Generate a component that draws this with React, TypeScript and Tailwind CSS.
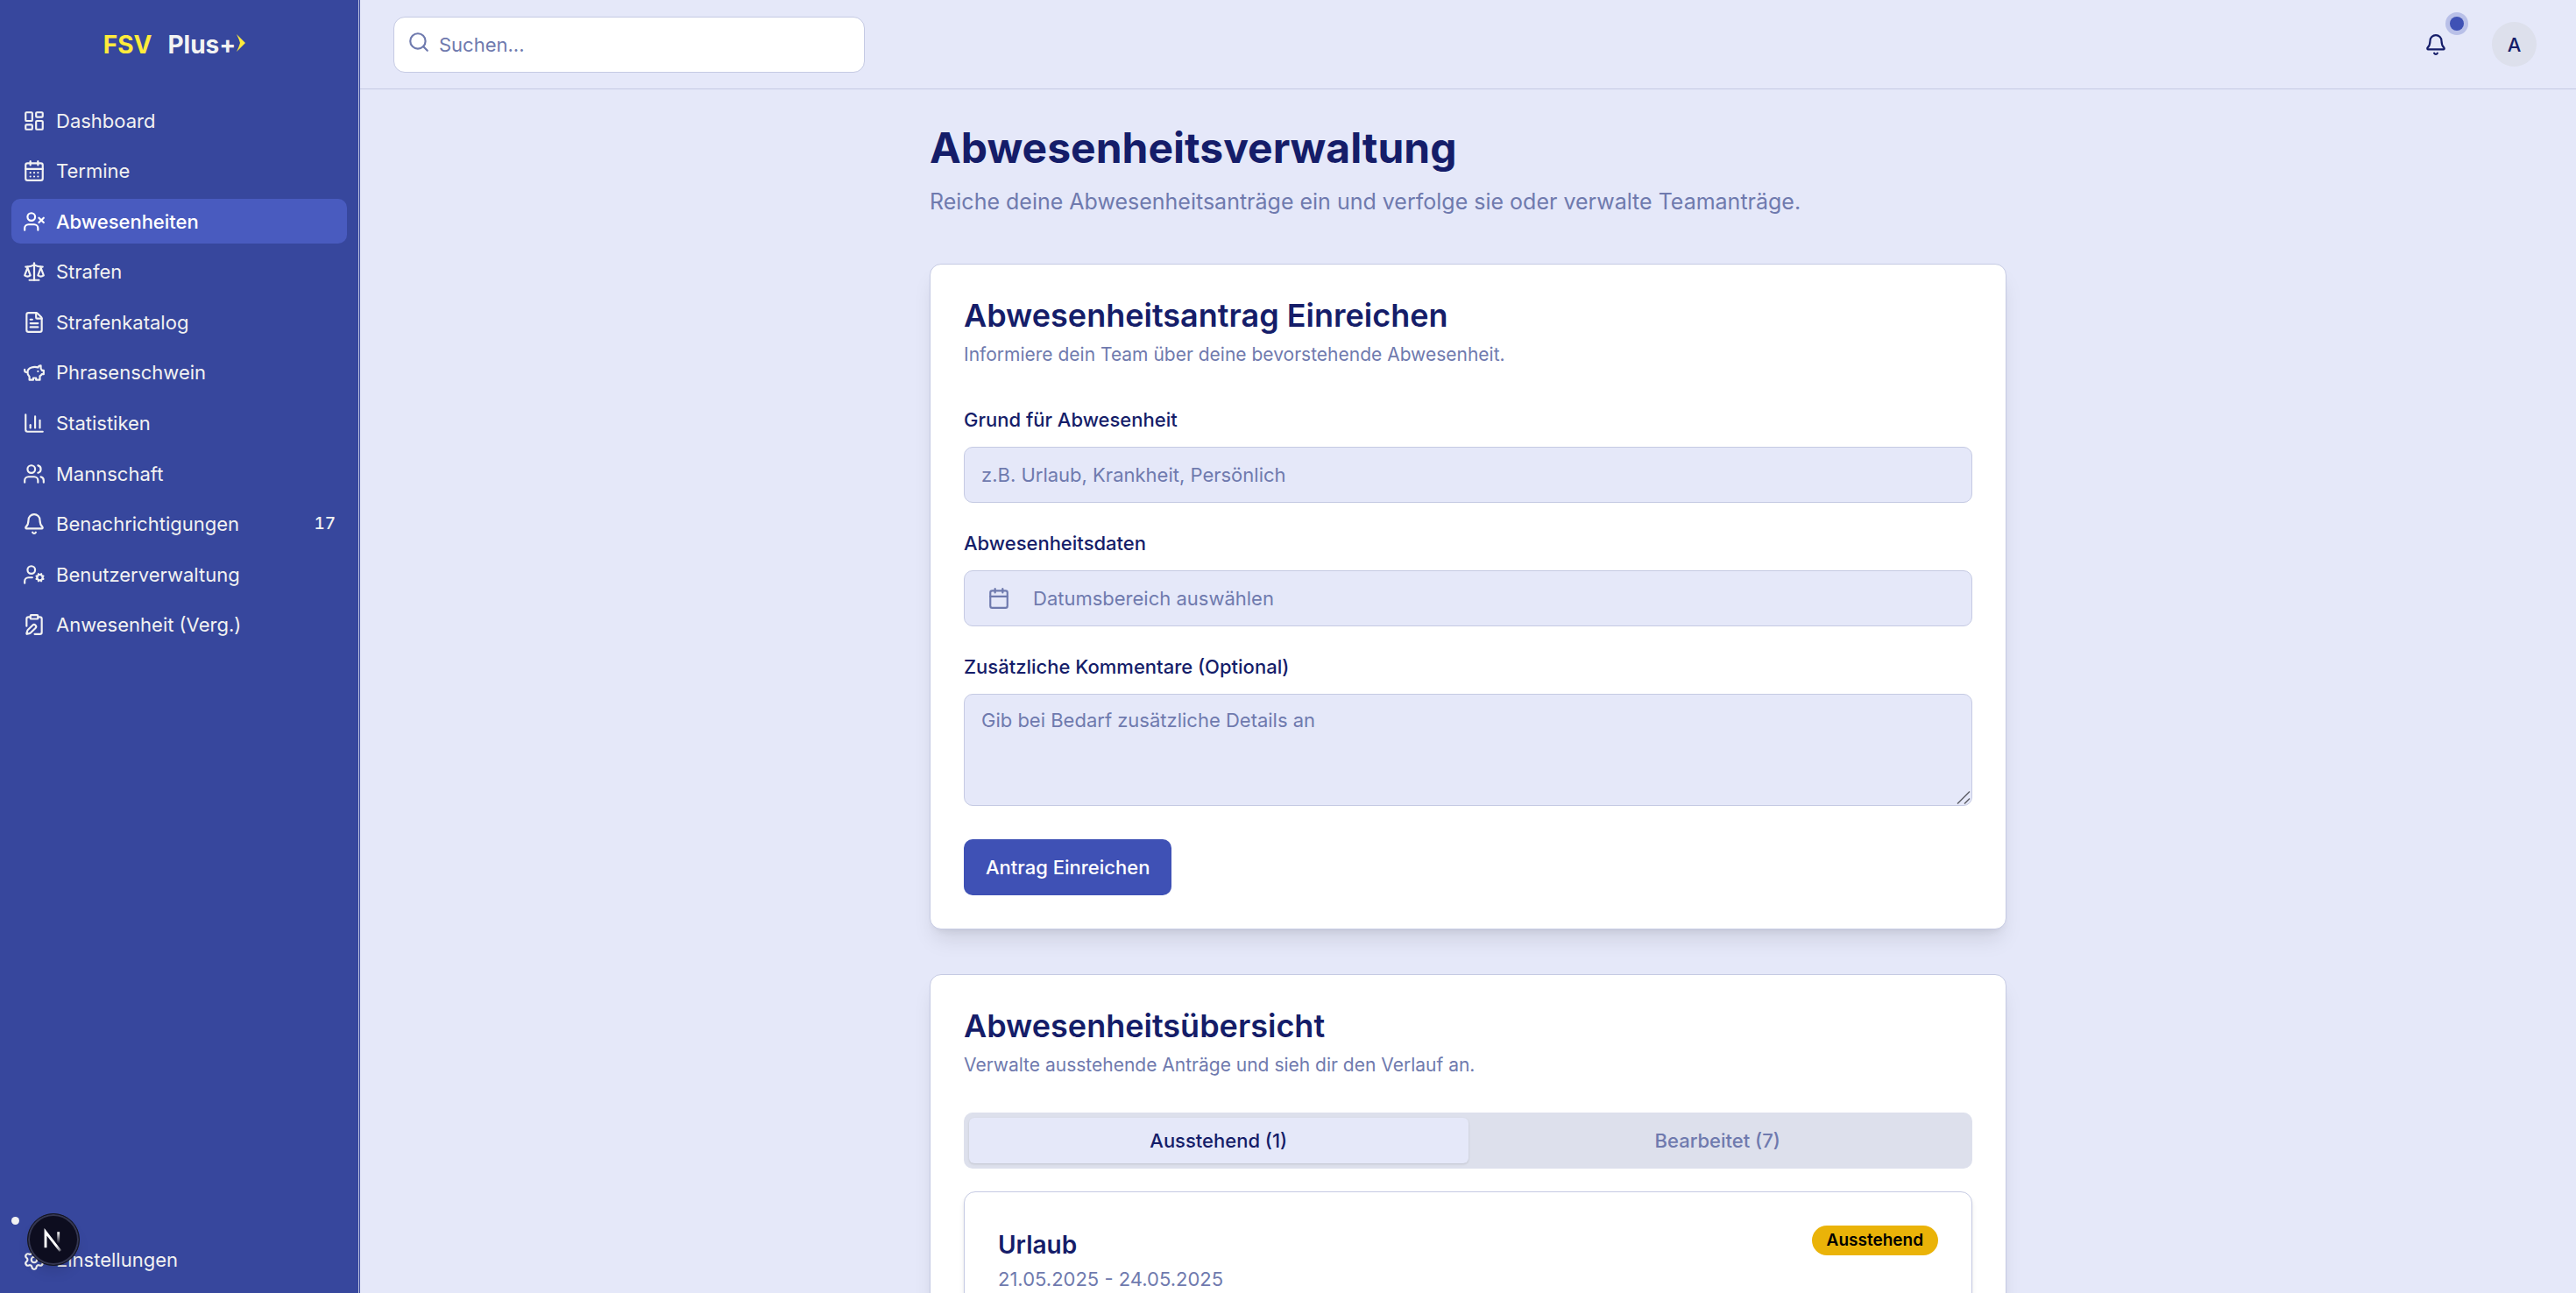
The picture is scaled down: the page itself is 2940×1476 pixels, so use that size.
import type { ReactNode } from "react";
import {
  Bell,
  Calendar,
  CalendarDays,
  ChartColumn,
  ClipboardPen,
  FileText,
  LayoutDashboard,
  Scale,
  Search,
  Settings,
  UserCog,
  UserX,
  Users,
  createLucideIcon,
  type LucideIcon,
} from "lucide-react";

const PiggyBank = createLucideIcon("piggy-bank-tail", [
  [
    "path",
    {
      d: "M19 5c-1.500 0-2.800 1.400-3 2-3.500-1.500-11-.3-11 5 0 1.800 0 3 2 4.500V20h4v-2h3v2h4v-4c1-.5 1.700-1 2-2h2v-4h-2c0-1-.5-1.500-1-2V5z",
      key: "body",
    },
  ],
  ["path", { d: "M2 9v1c0 1.100.9 2 2 2h1", key: "tail" }],
  ["path", { d: "M16 11h.01", key: "eye" }],
]);

type NavEntry = { label: string; icon: LucideIcon; active?: boolean; count?: number };

const navEntries: NavEntry[] = [
  { label: "Dashboard", icon: LayoutDashboard },
  { label: "Termine", icon: CalendarDays },
  { label: "Abwesenheiten", icon: UserX, active: true },
  { label: "Strafen", icon: Scale },
  { label: "Strafenkatalog", icon: FileText },
  { label: "Phrasenschwein", icon: PiggyBank },
  { label: "Statistiken", icon: ChartColumn },
  { label: "Mannschaft", icon: Users },
  { label: "Benachrichtigungen", icon: Bell, count: 17 },
  { label: "Benutzerverwaltung", icon: UserCog },
  { label: "Anwesenheit (Verg.)", icon: ClipboardPen },
];

function NavLink({ label, icon: Icon, active, count }: NavEntry) {
  return (
    <a
      href="#"
      aria-current={active ? "page" : undefined}
      className={
        active
          ? "flex h-[51px] items-center gap-3 rounded-[10px] bg-[#495bbf] px-[13px] font-medium text-white"
          : "flex h-[51px] items-center gap-3 rounded-[10px] px-[13px] text-[#f2f2f2]"
      }
    >
      <Icon size={26} className="shrink-0" aria-hidden="true" />
      <span className="flex-1">{label}</span>
      {count !== undefined && <span className="text-[19px] font-medium tabular-nums">{count}</span>}
    </a>
  );
}

function Logo() {
  return (
    <div className="flex h-[102px] shrink-0 items-center justify-center pr-[10px] text-[28px] font-bold">
      <span className="text-[#ffeb3b]">FSV</span>
      <span className="ml-[18px] text-[#f2f2f2]">Plus+</span>
      <svg viewBox="0 0 12 20" className="mb-1 h-[20px] w-[12px]" aria-hidden="true">
        <path d="M1 0 L11 10 L1 20 Q4 14 5 10 Q4 6 1 0 Z" fill="#ffeb3b" />
      </svg>
    </div>
  );
}

function Sidebar() {
  return (
    <aside className="flex w-[410px] shrink-0 flex-col border-r border-[#c5cae3] bg-[#37479d]">
      <Logo />
      <nav aria-label="Hauptnavigation" className="px-[13px] pt-[10px]">
        <ul className="flex h-[627px] flex-col justify-between">
          {navEntries.map((entry) => (
            <li key={entry.label}>
              <NavLink {...entry} />
            </li>
          ))}
        </ul>
      </nav>
      <div className="mt-auto px-[13px] pb-[13px]">
        <div className="flex h-[38px] items-center">
          <span className="size-[9px] rounded-full bg-[#f2f2f2]" />
        </div>
        <NavLink label="Einstellungen" icon={Settings} />
      </div>
    </aside>
  );
}

function DevBadge() {
  return (
    <button
      type="button"
      aria-label="Entwicklerwerkzeuge"
      className="fixed bottom-[31px] left-[31px] size-[60px] rounded-full border border-[#15161f] bg-[#0d0d1f] shadow-lg ring-[2px] ring-[#343650] ring-inset"
    >
      <svg viewBox="0 0 37.500 37.500" fill="none" className="size-full" aria-hidden="true">
        <defs>
          <linearGradient id="diagonal" gradientUnits="userSpaceOnUse" x1="9.950" y1="11.200" x2="13.800" y2="16">
            <stop stopColor="white" />
            <stop offset="0.600" stopColor="white" stopOpacity="0.600" />
            <stop offset="1" stopColor="white" stopOpacity="0" />
          </linearGradient>
          <linearGradient id="upright" gradientUnits="userSpaceOnUse" x1="11.800" y1="1" x2="11.800" y2="9.600">
            <stop stopColor="white" />
            <stop offset="1" stopColor="white" stopOpacity="0" />
          </linearGradient>
        </defs>
        <g transform="translate(10.6 12.1)" strokeWidth="1.860">
          <path d="M13.300 15.200 L2.340 1 V12.600" stroke="url(#diagonal)" />
          <path d="M11.825 1 V10" stroke="url(#upright)" />
        </g>
      </svg>
    </button>
  );
}

function Header() {
  return (
    <header className="flex h-[102px] shrink-0 items-center justify-between border-b border-[#c5cae3] pr-[45px] pl-[38px]">
      <label className="flex h-[64px] w-[538px] items-center gap-[10px] rounded-[13px] border border-[#c5cae3] bg-white px-[15px]">
        <Search size={26} className="mb-[6px] shrink-0 text-[#6f7aae]" aria-hidden="true" />
        <input
          type="search"
          aria-label="Suchen"
          placeholder="Suchen..."
          className="w-full bg-transparent outline-none placeholder:text-[#6f7aae]"
        />
      </label>
      <div className="flex items-center gap-[32px]">
        <button
          type="button"
          aria-label="Benachrichtigungen"
          className="relative flex size-[64px] items-center justify-center"
        >
          <Bell size={26} aria-hidden="true" />
          <span className="absolute -top-[5px] -right-[5px] flex size-[26px] items-center justify-center rounded-full bg-[#b9c0e8]">
            <span className="size-[16px] rounded-full bg-[#3f51b5]" />
          </span>
        </button>
        <button
          type="button"
          aria-label="Benutzerkonto"
          className="flex size-[51px] items-center justify-center rounded-full bg-[#dde0ec] font-medium"
        >
          A
        </button>
      </div>
    </header>
  );
}

function Card({ title, description, children }: { title: string; description: string; children: ReactNode }) {
  return (
    <section className="rounded-[13px] border border-[#c5cae3] bg-white p-[38px] shadow-[0_16px_24px_-5px_rgba(0,0,0,0.1),0_6px_10px_-6px_rgba(0,0,0,0.1)]">
      <h2 className="text-[36px] leading-[40px] font-semibold">{title}</h2>
      <p className="mt-[9px] text-[21px] leading-[32px] text-[#6f7aae]">{description}</p>
      {children}
    </section>
  );
}

function RequestForm() {
  return (
    <form className="mt-[41px] flex flex-col gap-[29px]">
      <div className="flex flex-col gap-[14px]">
        <label htmlFor="reason" className="leading-[34px] font-medium">
          Grund für Abwesenheit
        </label>
        <input
          id="reason"
          type="text"
          placeholder="z.B. Urlaub, Krankheit, Persönlich"
          className="h-[64px] rounded-[10px] border border-[#c5cae3] bg-[#e5e8f9] px-[19px] outline-none placeholder:text-[#6f7aae]"
        />
      </div>
      <div className="flex flex-col gap-[14px]">
        <label htmlFor="dates" className="leading-[34px] font-medium">
          Abwesenheitsdaten
        </label>
        <button
          id="dates"
          type="button"
          className="flex h-[64px] items-center gap-[26px] rounded-[10px] border border-[#c5cae3] bg-[#e5e8f9] px-[26px] text-[#6f7aae]"
        >
          <Calendar size={26} aria-hidden="true" />
          Datumsbereich auswählen
        </button>
      </div>
      <div className="flex flex-col gap-[14px]">
        <label htmlFor="comments" className="leading-[34px] font-medium">
          Zusätzliche Kommentare (Optional)
        </label>
        <div className="relative flex">
          <textarea
            id="comments"
            placeholder="Gib bei Bedarf zusätzliche Details an"
            className="h-[128px] flex-1 resize-none rounded-[10px] border border-[#c5cae3] bg-[#e5e8f9] px-[19px] py-[13px] outline-none placeholder:text-[#6f7aae]"
          />
          <svg
            viewBox="0 0 16 16"
            className="pointer-events-none absolute right-[2px] bottom-[2px] size-[16px]"
            stroke="#5f6068"
            strokeWidth="1.500"
            aria-hidden="true"
          >
            <path d="M1 15.500 L15 1.500 M9 15.500 L15 9.500" />
          </svg>
        </div>
      </div>
      <button
        type="submit"
        className="mt-[9px] h-[64px] self-start rounded-[10px] bg-[#3f51b5] px-[25px] font-medium text-white"
      >
        Antrag Einreichen
      </button>
    </form>
  );
}

function Overview() {
  return (
    <>
      <div role="tablist" className="mt-[38px] grid h-[64px] grid-cols-2 rounded-[10px] bg-[#dde0ec] p-[6px]">
        <button
          type="button"
          role="tab"
          aria-selected="true"
          className="rounded-[6px] bg-[#e5e8f9] font-medium shadow-sm"
        >
          Ausstehend (1)
        </button>
        <button type="button" role="tab" aria-selected="false" className="font-medium text-[#6f7aae]">
          Bearbeitet (7)
        </button>
      </div>
      <article className="mt-[26px] flex items-start justify-between rounded-[13px] border border-[#c5cae3] bg-white p-[38px] shadow-md">
        <div>
          <h3 className="text-[28px] leading-[45px] font-semibold">Urlaub</h3>
          <p className="text-[#6f7aae]">21.05.2025 - 24.05.2025</p>
        </div>
        <span className="flex h-[34px] items-center rounded-full bg-[#eab308] px-[17px] text-[19px] font-semibold text-black">
          Ausstehend
        </span>
      </article>
    </>
  );
}

export default function App() {
  return (
    <div className="flex h-screen overflow-hidden bg-[#e5e8f9] font-[Inter,sans-serif] text-[22px] leading-[32px] text-[#151d69]">
      <Sidebar />
      <div className="flex min-w-0 flex-1 flex-col border-l border-[#37479d]">
        <Header />
        <main className="min-h-0 flex-1 overflow-hidden pt-[38px]">
          <div className="mx-auto flex w-full max-w-[1229px] flex-col gap-[51px]">
            <div>
              <h1 className="text-[48px] leading-[58px] font-bold">Abwesenheitsverwaltung</h1>
              <p className="mt-3 text-[25px] leading-[40px] text-[#6f7aae]">
                Reiche deine Abwesenheitsanträge ein und verfolge sie oder verwalte Teamanträge.
              </p>
            </div>
            <Card
              title="Abwesenheitsantrag Einreichen"
              description="Informiere dein Team über deine bevorstehende Abwesenheit."
            >
              <RequestForm />
            </Card>
            <Card title="Abwesenheitsübersicht" description="Verwalte ausstehende Anträge und sieh dir den Verlauf an.">
              <Overview />
            </Card>
          </div>
        </main>
      </div>
      <DevBadge />
    </div>
  );
}
